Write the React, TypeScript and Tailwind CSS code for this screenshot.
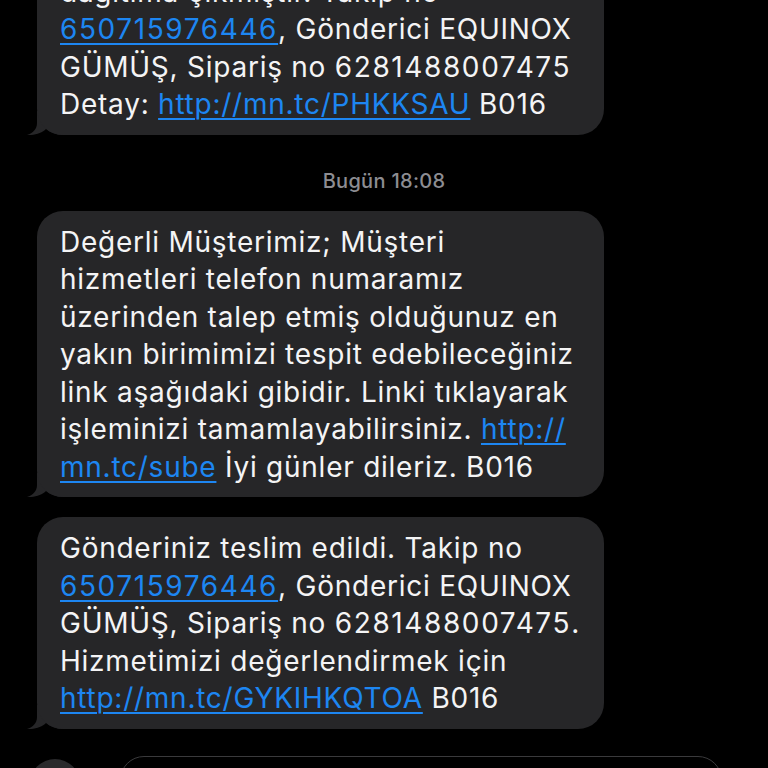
import React from "react";

const link = "text-[#1d86f2] underline decoration-[2px] underline-offset-[4px]";
const num = "tracking-[1.6px]";

function Tail() {
  return (
    <svg
      className="absolute left-[-10px] bottom-0 w-[36px] h-[24px]"
      viewBox="0 0 36 24"
      fill="#262628"
    >
      <path d="M10 0 V12 C10 18 6 22 0 24 C8 24.5 15 22 19 18 C24 22 30 24 36 24 V0 Z" />
    </svg>
  );
}

function Bubble({ children, className = "" }: { children: React.ReactNode; className?: string }) {
  return (
    <div className={`relative w-[567px] ${className}`}>
      <div className="relative z-10 rounded-[26px] bg-[#262628] pl-[23px] pr-[18px] pt-[13px] pb-[11px] text-[28px] leading-[37.5px] tracking-[0.75px] text-[#f4f4f5] whitespace-nowrap">
        {children}
      </div>
      <Tail />
    </div>
  );
}

export default function App() {
  return (
    <div
      className="h-[768px] w-[768px] overflow-hidden bg-black flex flex-col"
      style={{ fontFamily: "Inter, 'Noto Sans', sans-serif" }}
    >
      <div className="pl-[37px]">
        <Bubble className="mt-[-77px]">
          Sayın müşterimiz, gönderiniz
          <br />
          dağıtıma çıkmıştır. Takip no
          <br />
          <span className={`${link} ${num}`}>650715976446</span>, Gönderici EQUINOX
          <br />
          GÜMÜŞ, Sipariş no <span className={num}>6281488007475</span>
          <br />
          Detay: <span className={link}>http://mn.tc/PHKKSAU</span> B016
        </Bubble>
      </div>

      <div className="mt-[34px] h-[24px] flex items-center justify-center text-[20px] font-medium tracking-[0.3px] text-[#8d8d92]">
        Bugün 18:08
      </div>

      <div className="pl-[37px] mt-[18px]">
        <Bubble>
          Değerli Müşterimiz; Müşteri
          <br />
          hizmetleri telefon numaramız
          <br />
          üzerinden talep etmiş olduğunuz en
          <br />
          yakın birimimizi tespit edebileceğiniz
          <br />
          link aşağıdaki gibidir. Linki tıklayarak
          <br />
          işleminizi tamamlayabilirsiniz. <span className={link}>http://</span>
          <br />
          <span className={link}>mn.tc/sube</span> İyi günler dileriz. B016
        </Bubble>
      </div>

      <div className="pl-[37px] mt-[20px]">
        <Bubble>
          Gönderiniz teslim edildi. Takip no
          <br />
          <span className={`${link} ${num}`}>650715976446</span>, Gönderici EQUINOX
          <br />
          GÜMÜŞ, Sipariş no <span className={num}>6281488007475</span>.
          <br />
          Hizmetimizi değerlendirmek için
          <br />
          <span className={link}>http://mn.tc/GYKIHKQTOA</span> B016
        </Bubble>
      </div>

      <div className="mt-[27px] flex items-start">
        <div className="ml-[30px] mt-[3px] h-[50px] w-[50px] shrink-0 rounded-full bg-[#2a2a2c]" />
        <div className="ml-[40px] h-[50px] w-[602px] rounded-[24px] border border-[#3a3a3c]" />
      </div>
    </div>
  );
}
